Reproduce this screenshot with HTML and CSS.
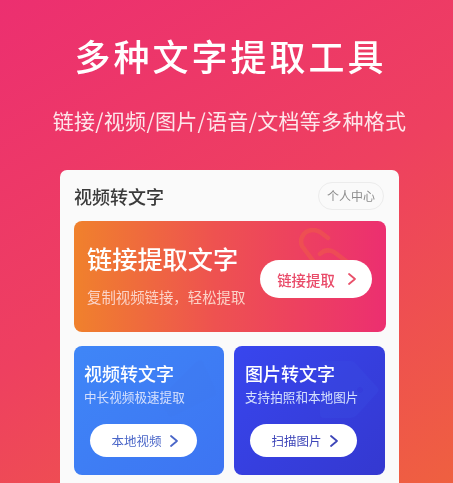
FILE: index.html
```html
<!DOCTYPE html>
<html lang="zh-CN">
<head>
<meta charset="utf-8">
<title>多种文字提取工具</title>
<link rel="stylesheet" href="styles.css">
</head>
<body>
<main class="page">
  <h1 class="headline">多种文字提取工具</h1>
  <p class="tagline">链接/视频/图片/语音/文档等多种格式</p>
  <section class="panel">
    <header class="panel-head">
      <h2 class="panel-title">视频转文字</h2>
      <span class="profile">个人中心</span>
    </header>
    <div class="banner">
      <svg class="banner-art" viewBox="0 0 56 36" aria-hidden="true"><path d="M30 10 L22 4 Q15 0 8 4 Q1 10 4 18 L16 34 M22 26 Q28 20 36 24 L52 36" /></svg>
      <div class="banner-copy">
        <h3 class="banner-title">链接提取文字</h3>
        <p class="banner-sub">复制视频链接，轻松提取</p>
      </div>
      <a class="btn btn-large">链接提取<svg class="chev" viewBox="0 0 10 14" aria-hidden="true"><path d="M2 2 L8 7 L2 12" /></svg></a>
    </div>
    <div class="tools">
      <article class="tool tool-video">
        <svg class="tool-art" viewBox="0 0 60 60" aria-hidden="true"><path d="M2 40 L38 4 Q42 0 45 4 L58 32 Q60 36 56 38 L16 58 Q12 60 10 56 L2 44 Q0 42 2 40 Z" /></svg>
        <h3 class="tool-title">视频转文字</h3>
        <p class="tool-sub">中长视频极速提取</p>
        <a class="btn btn-small">本地视频<svg class="chev" viewBox="0 0 10 14" aria-hidden="true"><path d="M2 2 L8 7 L2 12" /></svg></a>
      </article>
      <article class="tool tool-image">
        <svg class="tool-art" viewBox="0 0 60 60" aria-hidden="true"><path fill-rule="evenodd" d="M4 2 L30 2 Q34 2 37 6 L57 28 Q60 31 57 34 L37 56 Q34 59 30 59 L4 59 Q0 59 0 55 L0 6 Q0 2 4 2 Z M40 28 a3 3 0 1 0 .01 0 Z" /></svg>
        <h3 class="tool-title">图片转文字</h3>
        <p class="tool-sub">支持拍照和本地图片</p>
        <a class="btn btn-small">扫描图片<svg class="chev" viewBox="0 0 10 14" aria-hidden="true"><path d="M2 2 L8 7 L2 12" /></svg></a>
      </article>
    </div>
  </section>
</main>
</body>
</html>
```
FILE: styles.css
```css
* { box-sizing: border-box; margin: 0; padding: 0; }
html, body { height: 483px; overflow: hidden; }
body { font-family: "Noto Sans CJK SC", "Noto Sans", sans-serif; }
.page {
  height: 483px;
  overflow: hidden;
  background: linear-gradient(150deg, #ec2f70 0%, #ee4060 50%, #ef6040 100%);
  display: flex;
  flex-direction: column;
  align-items: center;
  color: #fff;
}
.headline {
  margin-top: 29px;
  height: 52px;
  line-height: 52px;
  font-size: 36px;
  font-weight: 500;
  letter-spacing: 3px;
  margin-left: 8px;
  filter: blur(.4px);
}
.tagline {
  margin-top: 24px;
  height: 30px;
  line-height: 30px;
  font-size: 21px;
  letter-spacing: .3px;
  margin-left: 6px;
  color: #fde6ea;
  filter: blur(.4px);
}
.panel {
  margin-top: 35px;
  margin-left: 6px;
  width: 339px;
  height: 320px;
  flex: none;
  background: #fafafa;
  border-radius: 7px 7px 0 0;
  padding: 12px 13px 0 14px;
  filter: blur(.45px);
}
.panel-head {
  display: flex;
  align-items: center;
  justify-content: space-between;
  height: 28px;
  padding-right: 2px;
}
.panel-title {
  font-size: 18px;
  font-weight: 500;
  color: #3a3a3a;
  line-height: 28px;
}
.profile {
  width: 66px;
  height: 28px;
  line-height: 26px;
  text-align: center;
  font-size: 12px;
  color: #8c8c8c;
  border: 1px solid #ececec;
  border-radius: 14px;
}
.banner {
  position: relative;
  overflow: hidden;
  margin-top: 11px;
  height: 111px;
  border-radius: 8px;
  background: linear-gradient(90deg, #f0812c 0%, #ee5250 45%, #ec2f70 100%);
  display: flex;
  align-items: flex-start;
  justify-content: space-between;
  padding: 0 14px 0 13px;
}
.banner-art {
  position: absolute;
  left: 224px;
  top: 7px;
  width: 56px;
  height: 36px;
  fill: none;
  stroke: #f0663f;
  stroke-width: 4.5;
  stroke-linecap: round;
  opacity: .4;
}
.banner-copy { position: relative; }
.banner-title {
  margin-top: 19px;
  font-size: 25.2px;
  line-height: 36px;
  font-weight: 500;
}
.banner-sub {
  margin-top: 11px;
  font-size: 14.4px;
  line-height: 20px;
  color: #fbd3c8;
}
.btn {
  position: relative;
  display: flex;
  align-items: center;
  justify-content: center;
  background: #fff;
  flex: none;
}
.btn-large {
  margin-top: 39px;
  width: 112px;
  height: 38px;
  border-radius: 19px;
  padding-left: 2px;
  font-size: 14.4px;
  font-weight: 500;
  color: #e94a68;
  gap: 12px;
}
.btn-large .chev { stroke: #e9506a; }
.chev {
  width: 10px;
  height: 14px;
  fill: none;
  stroke-width: 1.8;
  stroke-linecap: round;
  stroke-linejoin: round;
}
.tools {
  margin-top: 14px;
  display: grid;
  grid-template-columns: 150px 151px;
  gap: 10px;
}
.tool {
  position: relative;
  overflow: hidden;
  height: 129px;
  border-radius: 8px;
  padding: 14px 10px 0;
  display: flex;
  flex-direction: column;
  align-items: flex-start;
}
.tool-image { padding-left: 11px; }
.tool-video { background: linear-gradient(135deg, #3f86f7 0%, #3d74f2 100%); }
.tool-image { background: linear-gradient(135deg, #3846ee 0%, #3438d0 100%); }
.tool-art {
  position: absolute;
  width: 60px;
  height: 60px;
  opacity: .3;
}
.tool-video .tool-art { fill: #3f79f0; left: 84px; top: 12px; }
.tool-image .tool-art { fill: #3a4fe4; left: 86px; top: 13px; }
.tool-title {
  position: relative;
  font-size: 18px;
  line-height: 26px;
  font-weight: 500;
}
.tool-sub {
  position: relative;
  font-size: 12.6px;
  line-height: 18px;
  margin-top: 2px;
  color: #d5e0fd;
}
.btn-small {
  align-self: flex-start;
  margin: 18px 0 0 6px;
  width: 107px;
  height: 33px;
  border-radius: 17px;
  padding-left: 3px;
  font-size: 12.5px;
  gap: 7px;
}
.tool-image .btn-small { margin-left: 5px; }
.tool-video .btn-small { color: #4a66c8; }
.tool-video .chev { stroke: #4a66c8; }
.tool-image .btn-small { color: #3d45b8; }
.tool-image .chev { stroke: #3d45b8; }
```
